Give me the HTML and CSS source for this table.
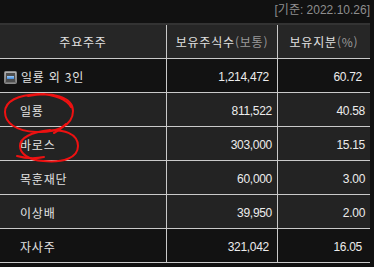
FILE: index.html
```html
<!DOCTYPE html>
<html lang="ko">
<head>
<meta charset="utf-8">
<link rel="stylesheet" href="styles.css">
</head>
<body>
<div class="wrap">
  <div class="date">[기준: 2022.10.26]</div>
  <table class="holders">
    <colgroup>
      <col class="c1"><col class="c2"><col class="c3">
    </colgroup>
    <thead>
      <tr>
        <th class="col-name">주요주주</th>
        <th class="col-mid">보유주식수<span class="sub">(보통)</span></th>
        <th>보유지분<span class="sub">(%)</span></th>
      </tr>
    </thead>
    <tbody>
      <tr class="dark total">
        <td class="name"><svg class="toggle" width="13" height="13" viewBox="0 0 13 13"><defs><linearGradient id="g" x1="0" y1="0" x2="0" y2="1"><stop offset="0" stop-color="#b5b5b5"/><stop offset="1" stop-color="#6e6e6e"/></linearGradient><linearGradient id="b" x1="0" y1="0" x2="0" y2="1"><stop offset="0" stop-color="#9fd0ff"/><stop offset="1" stop-color="#3f86d6"/></linearGradient></defs><rect x="0.5" y="0.5" width="12" height="12" rx="1" fill="url(#g)" stroke="#8a8a8a"/><rect x="2" y="2" width="9" height="9" fill="#4d4d4d"/><rect x="3" y="5" width="7" height="3" fill="url(#b)"/></svg>일룡 외 3인</td>
        <td class="num">1,214,472</td>
        <td class="num">60.72</td>
      </tr>
      <tr>
        <td class="name">일룡</td>
        <td class="num">811,522</td>
        <td class="num">40.58</td>
      </tr>
      <tr>
        <td class="name">바로스</td>
        <td class="num">303,000</td>
        <td class="num">15.15</td>
      </tr>
      <tr>
        <td class="name">목훈재단</td>
        <td class="num">60,000</td>
        <td class="num">3.00</td>
      </tr>
      <tr>
        <td class="name">이상배</td>
        <td class="num">39,950</td>
        <td class="num">2.00</td>
      </tr>
      <tr class="dark">
        <td class="name">자사주</td>
        <td class="num">321,042</td>
        <td class="num">16.05</td>
      </tr>
    </tbody>
  </table>
  <svg class="marks" width="374" height="267" viewBox="0 0 374 267">
    <path d="M28,96 C52,91 73,97 73,111 C73,125 57,133 36,132 C16,131 5,123 5,112 C5,101 18,95 38,94 C55,94 67,100 71,107" />
    <path d="M66,124 C62,128 58,131 54,133" />
    <path d="M44,131 C64,128 78,134 78,146 C78,158 63,163 43,161 C29,160 20,154 20,146 C20,138 31,132 50,130" />
    <path d="M17,156 C24,158 34,159 44,157" />
  </svg>
</div>
</body>
</html>
```

FILE: styles.css
```css
html, body {
  margin: 0;
  padding: 0;
  background: #111111;
}
body {
  font-family: "Noto Sans CJK KR", "Noto Sans", sans-serif;
  color: #e2e2e2;
}
.wrap {
  position: relative;
  width: 370px;
}
.date {
  height: 23px;
  line-height: 20px;
  text-align: right;
  font-size: 12px;
  color: #8e8e8e;
  font-family: "Liberation Sans", "Noto Sans CJK KR", sans-serif;
}
.holders {
  width: 370px;
  table-layout: fixed;
  border-collapse: separate;
  border-spacing: 0;
  border-top: 2px solid #333333;
}
.c1 { width: 167px; }
.c2 { width: 111px; }
.c3 { width: 92px; }
.holders th,
.holders td {
  padding: 0;
  border-bottom: 1px solid #c9c9c9;
  vertical-align: middle;
  white-space: nowrap;
}
.holders th {
  height: 33px;
  background: #262626;
  font-weight: normal;
  font-size: 12px;
  letter-spacing: 0.8px;
  color: #e0e0e0;
  text-align: center;
}
.col-name, .col-mid,
.holders td.name,
.holders td.num:nth-child(2) {
  border-right: 1px solid #c9c9c9;
}
.sub {
  color: #9a9a9a;
}
.holders td {
  height: 33px;
  background: #232323;
}
.holders tr.dark td {
  background: #121212;
}
.holders td.name {
  padding-left: 20px;
  font-size: 12px;
  letter-spacing: 0.8px;
  padding-top: 2px;
  height: 31px;
}
.holders tr.total td.name {
  padding-left: 4px;
}
.toggle {
  vertical-align: -2px;
  margin-right: 4px;
}
.holders td.num {
  text-align: right;
  padding-right: 5px;
  padding-top: 2px;
  height: 31px;
  font-family: "Liberation Sans", sans-serif;
  font-size: 12px;
  letter-spacing: -0.3px;
  color: #ececec;
}
.holders tr.dark td.num {
  padding-right: 8px;
}
.marks {
  position: absolute;
  left: 0;
  top: 0;
  pointer-events: none;
}
.marks path {
  fill: none;
  stroke: #ee1111;
  stroke-width: 2;
  stroke-linecap: round;
}
```
